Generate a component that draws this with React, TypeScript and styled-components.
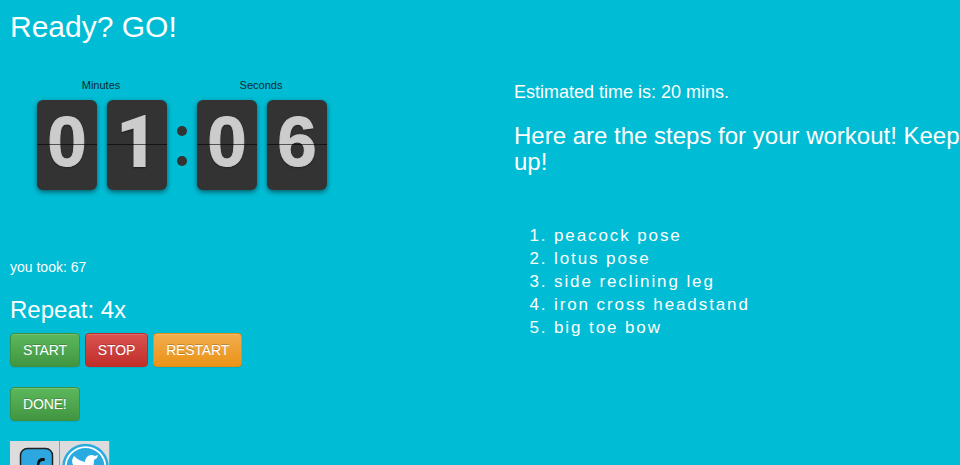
import React from "react";
import styled, { createGlobalStyle } from "styled-components";

const Global = createGlobalStyle`
  html, body {
    margin: 0;
    height: 465px;
    overflow: hidden;
    background: #00bcd4;
  }
  body {
    font-family: "Liberation Sans", Arial, sans-serif;
    color: #fff;
  }
`;

const Page = styled.div`
  width: 960px;
  height: 465px;
  overflow: hidden;
  padding: 0 0 0 10px;
  box-sizing: border-box;
`;
const Title = styled.h1`
  margin: 0;
  padding-top: 10px;
  font-size: 30px;
  line-height: 33px;
  font-weight: 400;
`;
const Columns = styled.div`
  display: grid;
  grid-template-columns: 504px 470px;
`;
const LeftCol = styled.div`
  display: flex;
  flex-direction: column;
  align-items: flex-start;
`;
const Clock = styled.div`
  display: flex;
  margin: 36px 0 0 27px;
`;
const ClockGroup = styled.div`
  display: flex;
  flex-direction: column;
`;
const ClockLabel = styled.div`
  font-size: 11px;
  line-height: 12px;
  height: 21px;
  padding-right: 2px;
  box-sizing: border-box;
  color: #0b2a30;
  text-align: center;
`;
const Cards = styled.div`
  display: flex;
  gap: 10px;
`;
// the "1" on the reference has no foot, Liberation's has one, so it gets Roboto
const Card = styled.div<{ $footless?: boolean }>`
  position: relative;
  width: 60px;
  height: 90px;
  border-radius: 6px;
  background: #333;
  box-shadow: 0 2px 5px rgba(0, 0, 0, 0.5);
  color: #ccc;
  font-family: ${({ $footless }) => ($footless ? "Roboto, sans-serif" : "inherit")};
  font-size: ${({ $footless }) => ($footless ? "73px" : "71px")};
  font-weight: ${({ $footless }) => ($footless ? 900 : 700)};
  line-height: 84px;
  text-align: center;
  text-shadow: 0 1px 2px rgba(0, 0, 0, 0.5);
  -webkit-text-stroke: ${({ $footless }) => ($footless ? "0" : "1px #ccc")};
  &:after {
    content: "";
    position: absolute;
    left: 0;
    right: 0;
    top: 44px;
    height: 1px;
    background: rgba(0, 0, 0, 0.6);
  }
`;
const Divider = styled.div`
  width: 30px;
  padding-top: 47px;
  display: flex;
  flex-direction: column;
  align-items: center;
  gap: 20px;
`;
const Dot = styled.span`
  width: 10px;
  height: 10px;
  border-radius: 50%;
  background: #333;
`;
const Took = styled.div`
  margin-top: 67px;
  font-size: 14px;
  line-height: 20px;
`;
const Repeat = styled.h3`
  margin: 20px 0 0;
  font-size: 24px;
  line-height: 26px;
  font-weight: 400;
`;
const ButtonRow = styled.div<{ $top: number }>`
  display: flex;
  gap: 5px;
  margin-top: ${({ $top }) => $top}px;
`;
const tones = {
  green: ["#5cb85c", "#419641", "#3e8f3e"],
  red: ["#d9534f", "#c12e2a", "#b92c28"],
  orange: ["#f0ad4e", "#eb9316", "#e38d13"],
};
const Btn = styled.button<{ $tone: keyof typeof tones }>`
  font-family: inherit;
  font-size: 14px;
  line-height: 20px;
  letter-spacing: -0.15px;
  padding: 6px 12px;
  height: 34px;
  color: #fff;
  border-radius: 4px;
  border: 1px solid ${({ $tone }) => tones[$tone][2]};
  background: linear-gradient(
    to bottom,
    ${({ $tone }) => tones[$tone][0]},
    ${({ $tone }) => tones[$tone][1]}
  );
  text-shadow: 0 -1px 0 rgba(0, 0, 0, 0.2);
  box-shadow: inset 0 1px 0 rgba(255, 255, 255, 0.15), 0 1px 1px rgba(0, 0, 0, 0.075);
`;
const Social = styled.div`
  display: flex;
  margin-top: 20px;
`;
const SocialTile = styled.div`
  width: 49px;
  height: 50px;
  background: #dcdcdc;
  border-right: 1px solid #9a9a9a;
`;
const RightCol = styled.div`
  padding-top: 32px;
`;
const Estimate = styled.div`
  font-size: 18px;
  line-height: 23px;
  margin-top: 6px;
`;
const Steps = styled.h3`
  margin: 19px 0 0;
  font-size: 24px;
  line-height: 26px;
  font-weight: 400;
`;
const StepList = styled.ol`
  margin: 49px 0 0;
  padding-left: 40px;
  font-size: 17px;
  line-height: 23px;
  letter-spacing: 1.9px;
`;

const FacebookIcon = () => (
  <svg width="49" height="50" viewBox="0 0 49 50">
    <rect x="10.5" y="7.5" width="32" height="40" rx="7" fill="#2ea6e0" stroke="#222" strokeWidth="1.5" />
    <path d="M35 17.5c-5-1.500-7.500 1-8 5.500l-.5 3h-3.500v2.500h3l-1.500 10c-.3 2-1.500 3-3.500 2.500v2c3.500 .5 5.500-1 6-4.500l1.500-10h4v-2.500h-3.500l.5-3c.3-2.500 2-3.500 5-3z" fill="#111" />
  </svg>
);
const TwitterIcon = () => (
  <svg width="49" height="50" viewBox="0 0 49 50">
    <circle cx="25.500" cy="26" r="22" fill="#fff" stroke="#29abe2" strokeWidth="2.500" />
    <circle cx="25.500" cy="26" r="19" fill="#29abe2" />
    <path d="M14 15c3 3 6 5 11 6 0-5 5-9 10-6l3-1-1 3-3 2c0 10-6 21-15 21-4 0-6-1-8-2 3 0 5-1 7-3-3-.5-5-2-6-5h3c-3-1-4-3-4-6l3 1c-3-3-2-7 0-10z" fill="#fff" />
  </svg>
);

const App = () => (
  <Page>
    <Global />
    <Title>Ready? GO!</Title>
    <Columns>
      <LeftCol>
        <Clock>
          <ClockGroup>
            <ClockLabel>Minutes</ClockLabel>
            <Cards>
              <Card>0</Card>
              <Card $footless>1</Card>
            </Cards>
          </ClockGroup>
          <Divider>
            <Dot />
            <Dot />
          </Divider>
          <ClockGroup>
            <ClockLabel>Seconds</ClockLabel>
            <Cards>
              <Card>0</Card>
              <Card>6</Card>
            </Cards>
          </ClockGroup>
        </Clock>
        <Took>you took: 67</Took>
        <Repeat>Repeat: 4x</Repeat>
        <ButtonRow $top={10}>
          <Btn $tone="green">START</Btn>
          <Btn $tone="red">STOP</Btn>
          <Btn $tone="orange">RESTART</Btn>
        </ButtonRow>
        <ButtonRow $top={20}>
          <Btn $tone="green">DONE!</Btn>
        </ButtonRow>
        <Social>
          <SocialTile>
            <FacebookIcon />
          </SocialTile>
          <SocialTile>
            <TwitterIcon />
          </SocialTile>
        </Social>
      </LeftCol>
      <RightCol>
        <Estimate>Estimated time is: 20 mins.</Estimate>
        <Steps>Here are the steps for your workout! Keep it up!</Steps>
        <StepList>
          <li>peacock pose</li>
          <li>lotus pose</li>
          <li>side reclining leg</li>
          <li>iron cross headstand</li>
          <li>big toe bow</li>
        </StepList>
      </RightCol>
    </Columns>
  </Page>
);

export default App;
